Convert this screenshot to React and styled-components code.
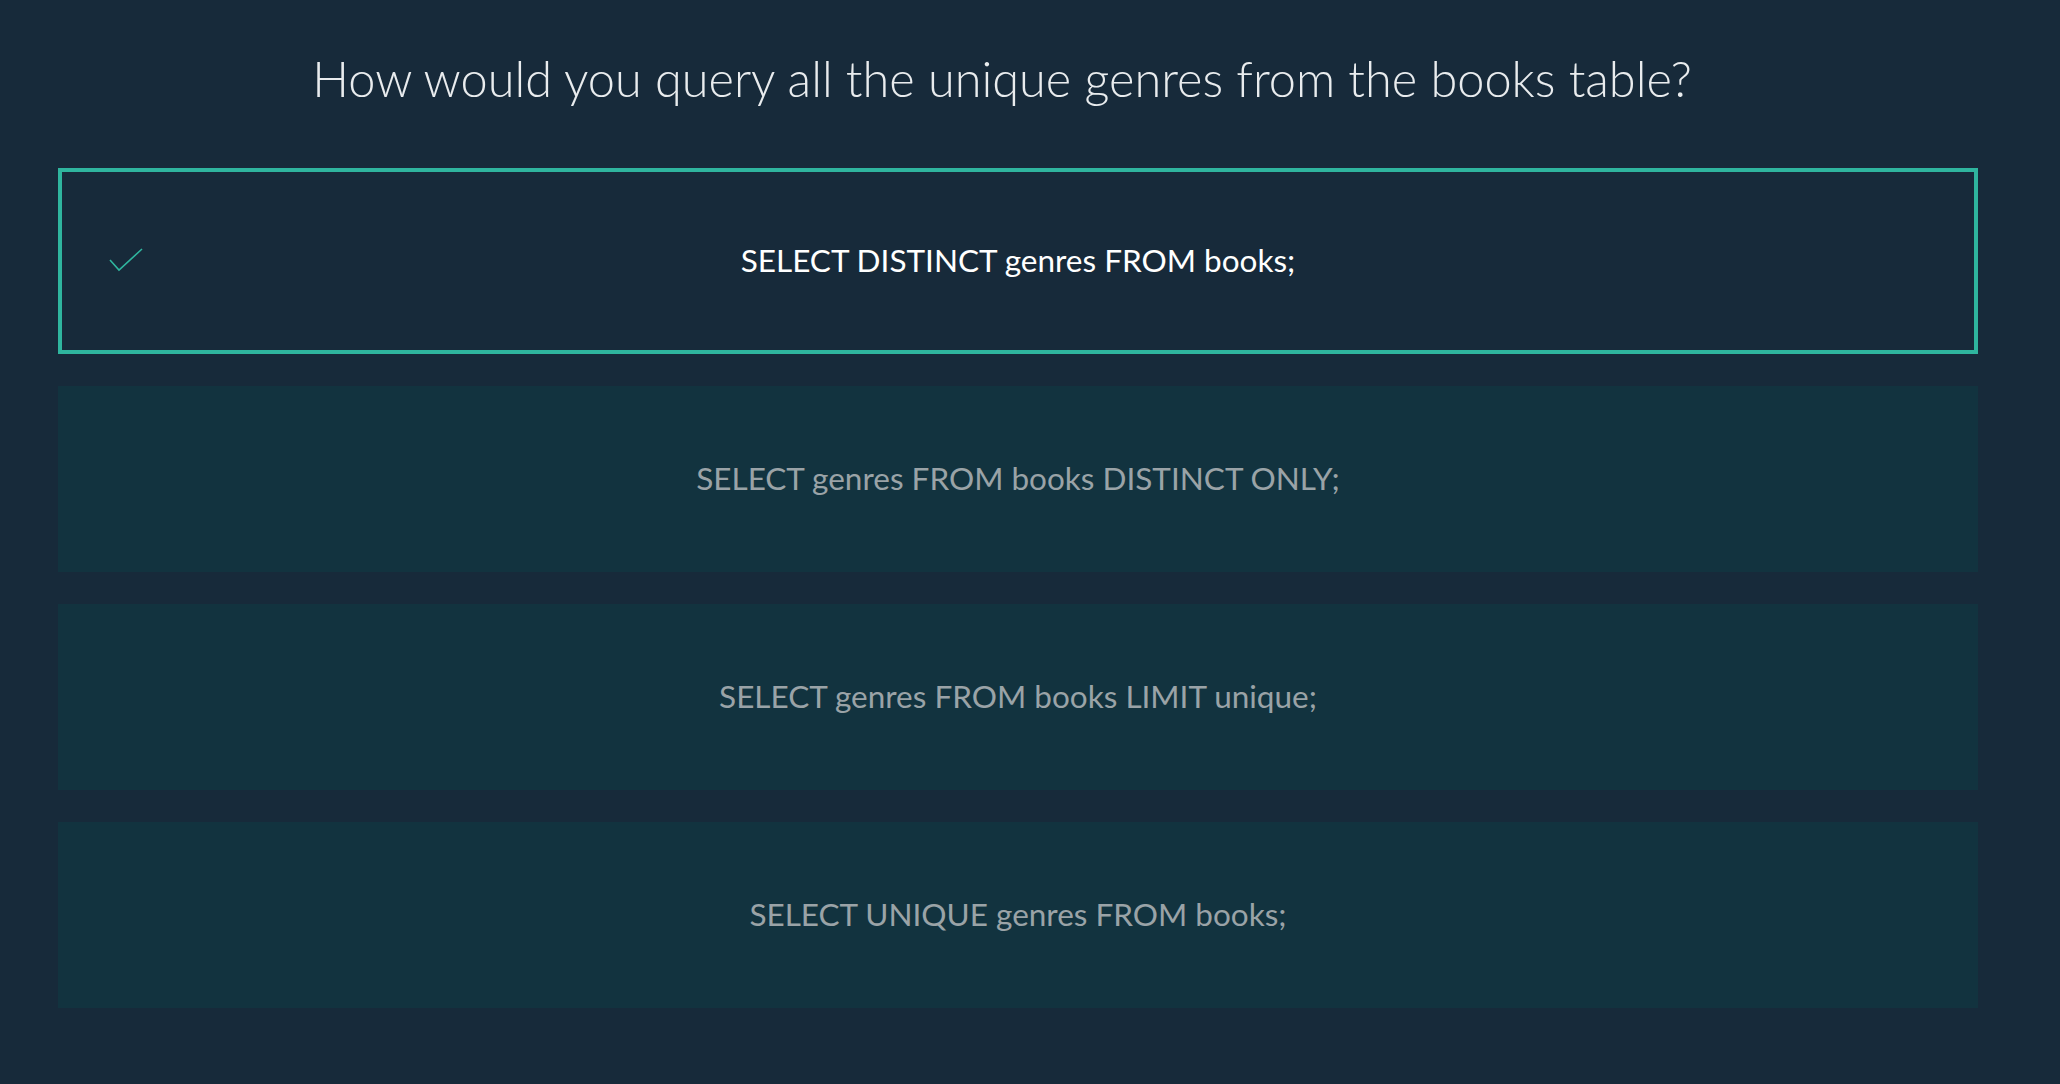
import React from "react";
import styled, { createGlobalStyle } from "styled-components";

const GlobalStyle = createGlobalStyle`
  html, body {
    margin: 0;
    padding: 0;
    background: #172a3a;
  }
  body {
    font-family: Lato, "Open Sans", sans-serif;
  }
`;

const Page = styled.div`
  min-height: 1084px;
  background: #172a3a;
  padding: 0 82px 0 58px;
  box-sizing: border-box;
`;

const Question = styled.h1`
  margin: 0;
  padding: 49px 32px 0 0;
  height: 168px;
  box-sizing: border-box;
  text-align: center;
  font-family: Lato, sans-serif;
  font-weight: 300;
  font-size: 48.7px;
  line-height: 1.2;
  color: #e9ecee;
`;

const Options = styled.div`
  display: flex;
  flex-direction: column;
  gap: 32px;
`;

const Option = styled.div`
  position: relative;
  height: 186px;
  box-sizing: border-box;
  display: flex;
  align-items: center;
  justify-content: center;
  padding-bottom: 2px;
  background: ${(p) => (p.$selected ? "#172a3a" : "#12333f")};
  border: ${(p) => (p.$selected ? "4px solid #2fb59e" : "none")};
  color: ${(p) => (p.$selected ? "#ffffff" : "#9aa3a7")};
  font-family: Lato, sans-serif;
  font-size: 31.5px;
  cursor: pointer;
`;

const Check = styled.svg`
  position: absolute;
  left: 47px;
  top: 76px;
  width: 36px;
  height: 26px;
`;

const options = [
  { text: "SELECT DISTINCT genres FROM books;", selected: true },
  { text: "SELECT genres FROM books DISTINCT ONLY;" },
  { text: "SELECT genres FROM books LIMIT unique;" },
  { text: "SELECT UNIQUE genres FROM books;" },
];

export default function App() {
  return (
    <>
      <GlobalStyle />
      <Page>
        <Question>How would you query all the unique genres from the books table?</Question>
        <Options>
          {options.map((o, i) => (
            <Option key={i} $selected={o.selected}>
              {o.selected && (
                <Check viewBox="0 0 36 26" fill="none">
                  <path d="M1 12 L10 22 L33 1" stroke="#2fb59e" strokeWidth="1.6" />
                </Check>
              )}
              {o.text}
            </Option>
          ))}
        </Options>
      </Page>
    </>
  );
}
